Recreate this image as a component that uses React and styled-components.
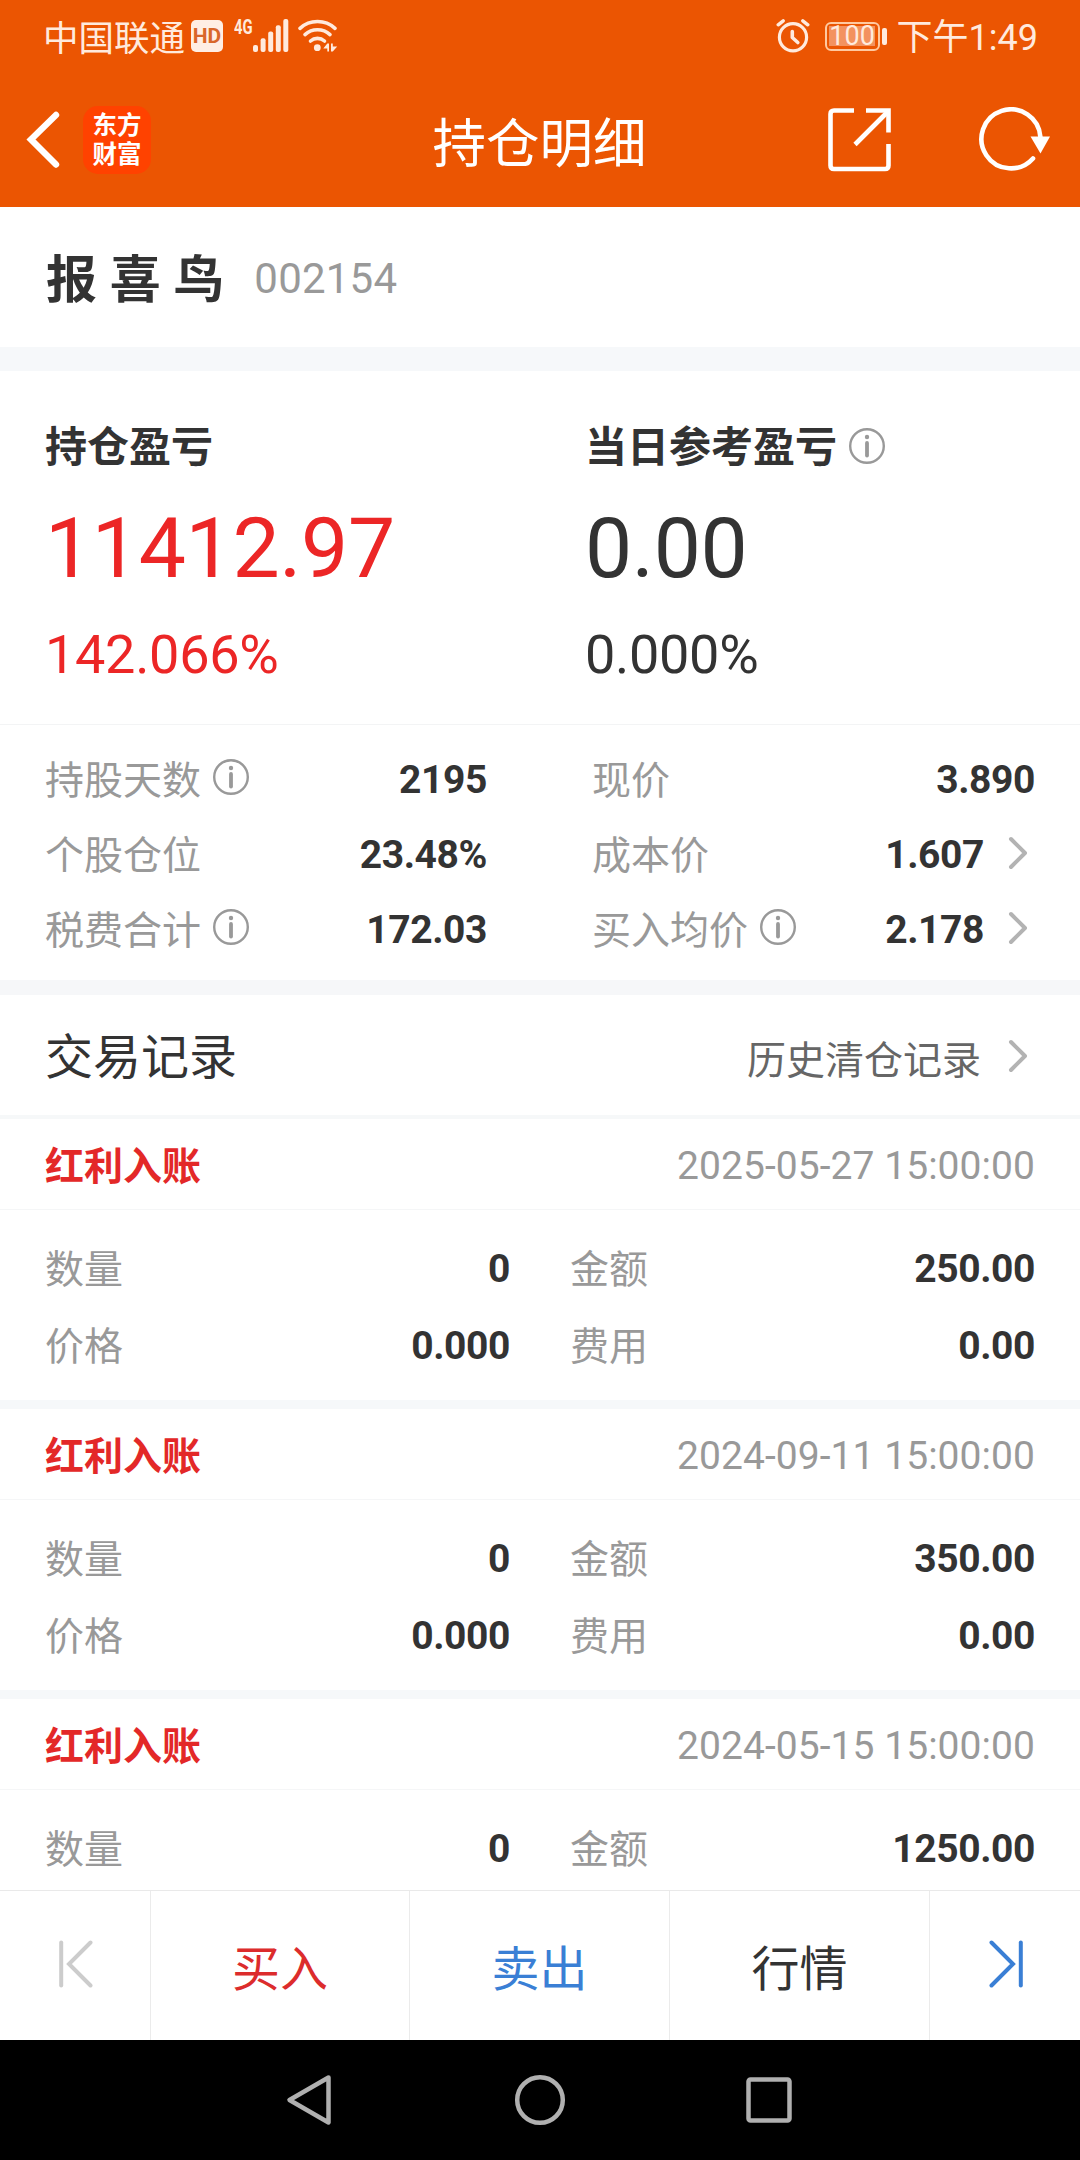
import React from 'react'
import styled, { createGlobalStyle } from 'styled-components'

const details = {
    left: [
        { label: '持股天数', value: '2195', info: true },
        { label: '个股仓位', value: '23.48%' },
        { label: '税费合计', value: '172.03', info: true },
    ],
    right: [
        { label: '现价', value: '3.890' },
        { label: '成本价', value: '1.607', link: true },
        { label: '买入均价', value: '2.178', info: true, link: true },
    ],
}

const records = [
    {
        type: '红利入账',
        time: '2025-05-27 15:00:00',
        cells: [['数量', '0'], ['金额', '250.00'], ['价格', '0.000'], ['费用', '0.00']],
    },
    {
        type: '红利入账',
        time: '2024-09-11 15:00:00',
        cells: [['数量', '0'], ['金额', '350.00'], ['价格', '0.000'], ['费用', '0.00']],
    },
    {
        type: '红利入账',
        time: '2024-05-15 15:00:00',
        cells: [['数量', '0'], ['金额', '1250.00']],
    },
]

//icons...
const InfoIcon = () => (
    <InfoSvg viewBox='0 0 36 36' width='36' height='36'>
        <circle cx='18' cy='18' r='16.8' fill='none' stroke='#999' strokeWidth='2.4' />
        <circle cx='18' cy='9' r='2.2' fill='#999' />
        <path d='M18 15v12.5' stroke='#999' strokeWidth='3.8' strokeLinecap='round' />
    </InfoSvg>
)

const Chevron = () => (
    <ChevronSvg viewBox='0 0 20 34' width='20' height='34'>
        <path d='M3 3l14 14L3 31' fill='none' stroke='#b3b3b3' strokeWidth='4' strokeLinecap='round' strokeLinejoin='round' />
    </ChevronSvg>
)

const SignalIcon = () => (
    <svg viewBox='0 0 36 34' width='36' height='34' fill='#ffeadd'>
        <rect x='0' y='26' width='5' height='7' rx='2' />
        <rect x='7.6' y='19.3' width='5' height='13.7' rx='2' />
        <rect x='15.2' y='12.6' width='5' height='20.4' rx='2' />
        <rect x='22.8' y='6.3' width='5' height='26.7' rx='2' />
        <rect x='30.3' y='0' width='5' height='33' rx='2' />
    </svg>
)

const WifiIcon = () => (
    <svg viewBox='0 0 40 34' width='40' height='34'>
        <g fill='none' stroke='#ffeadd' strokeWidth='3.6' strokeLinecap='round'>
            <path d='M2 9.3a26 26 0 0 1 35 0' />
            <path d='M7 15.6a18.5 18.5 0 0 1 25 0' />
            <path d='M12.5 22a10.8 10.8 0 0 1 14 0' />
        </g>
        <circle cx='19.3' cy='28.7' r='3.4' fill='#ffeadd' />
        <path d='M25.3 29.5L29.300 24.500H31V32.500H29.300V29.500ZM33 24.500H34.800V27.500H39.200L34.800 32.500H33Z' fill='#ffeadd' />
    </svg>
)

const AlarmIcon = () => (
    <svg viewBox='0 0 34 34' width='34' height='34' fill='none' stroke='#ffeadd' strokeLinecap='round'>
        <circle cx='17' cy='18.2' r='13.6' strokeWidth='3.2' />
        <path d='M16.3 12.5V18.5l5.5 5' strokeWidth='3.6' strokeLinejoin='round' />
        <path d='M2.2 5.8l5-4M31.8 5.8l-5-4' strokeWidth='3.4' />
    </svg>
)

const BackIcon = () => (
    <svg viewBox='0 0 36 60' width='36' height='60'>
        <path d='M32 5L7 29.500L32 54.500' fill='none' stroke='#fff' strokeWidth='6.4' strokeLinecap='round' />
    </svg>
)

const ShareIcon = () => (
    <svg viewBox='0 0 64 64' width='64' height='64' fill='none' stroke='#fff' strokeWidth='4.6'>
        <path d='M26 2.5H6Q2.5 2.5 2.5 6V57.5Q2.5 61 6 61H57Q60.5 61 60.5 57.5V36' />
        <path d='M38 2.5H60.5V24.5' />
        <path d='M27 36.5L60 3.5' />
    </svg>
)

const RefreshIcon = () => (
    <svg viewBox='0 0 72 66' width='72' height='66'>
        <path d='M54 51.5A29.5 29.5 0 1 1 61.4 30' fill='none' stroke='#fff' strokeWidth='4.6' strokeLinecap='round' />
        <path d='M51.5 29.5H71L61.5 46.5Z' fill='#fff' />
    </svg>
)

const StepIcon = ({ color, flip }) => (
    <StepSvg viewBox='0 0 34 48' width='34' height='48' $flip={flip} stroke={color}>
        <path d='M2.2 2.5V45.5' />
        <path d='M31.5 2.5L10 24L31.5 45.5' />
    </StepSvg>
)

const Detail = ({ item }) => (
    <DetailRow>
        <Label>{item.label}</Label>
        {item.info && <InfoIcon />}
        <Value>{item.value}</Value>
        {item.link && <Chevron />}
    </DetailRow>
)

const Record = ({ record }) => (
    <RecordStyled>
        <RecordHead>
            <RecordType>{record.type}</RecordType>
            <RecordTime>{record.time}</RecordTime>
        </RecordHead>
        <RecordBody>
            {record.cells.map(([label, value]) => (
                <RecordCell key={label}>
                    <Label>{label}</Label>
                    <Value>{value}</Value>
                </RecordCell>
            ))}
        </RecordBody>
    </RecordStyled>
)

const App = () => {
    return (
        <Screen>
            <GlobalStyle />
            <Header>
                <StatusBar>
                    <Carrier>中国联通</Carrier>
                    <HdBadge>HD</HdBadge>
                    <Network>4G</Network>
                    <SignalIcon />
                    <WifiCont><WifiIcon /></WifiCont>
                    <StatusRight>
                        <AlarmIcon />
                        <Battery><span>100</span></Battery>
                        <BatteryTip />
                        <Clock>下午1:49</Clock>
                    </StatusRight>
                </StatusBar>
                <NavBar>
                    <NavSide>
                        <BackIcon />
                        <Logo>
                            <span>东方</span>
                            <span>财富</span>
                        </Logo>
                    </NavSide>
                    <Title>持仓明细</Title>
                    <NavSide $end>
                        <ShareIcon />
                        <RefreshIcon />
                    </NavSide>
                </NavBar>
            </Header>

            <StockName>
                <h1>报 喜 鸟</h1>
                <span>002154</span>
            </StockName>

            <Summary>
                <SummaryCol $color='#ec2626'>
                    <h3>持仓盈亏</h3>
                    <Amount>11412.97</Amount>
                    <Percent>142.066%</Percent>
                </SummaryCol>
                <SummaryCol $color='#333'>
                    <h3>当日参考盈亏<InfoIcon /></h3>
                    <Amount>0.00</Amount>
                    <Percent>0.000%</Percent>
                </SummaryCol>
            </Summary>

            <Details>
                <div>{details.left.map((item) => <Detail key={item.label} item={item} />)}</div>
                <div>{details.right.map((item) => <Detail key={item.label} item={item} />)}</div>
            </Details>

            <SectionHead>
                <h2>交易记录</h2>
                <HistoryLink>历史清仓记录</HistoryLink>
                <Chevron />
            </SectionHead>

            <RecordList>
                {records.map((record) => <Record key={record.time} record={record} />)}
            </RecordList>

            <ActionBar>
                <Action><StepIcon color='#ccc' /></Action>
                <Action $color='#dc2c2c'>买入</Action>
                <Action $color='#3a7fd5'>卖出</Action>
                <Action $color='#333'>行情</Action>
                <Action><StepIcon color='#3a7fd5' flip /></Action>
            </ActionBar>

            <SystemNav>
                <svg viewBox='0 0 52 52' width='52' height='52'>
                    <path d='M43.5 3.5L4.5 26L43.5 48.5Z' />
                </svg>
                <svg viewBox='0 0 52 52' width='52' height='52'>
                    <circle cx='26' cy='26' r='22.8' />
                </svg>
                <svg viewBox='0 0 52 52' width='52' height='52'>
                    <rect x='5.5' y='5.5' width='41' height='41' rx='2' />
                </svg>
            </SystemNav>
        </Screen>
    )
}

const GlobalStyle = createGlobalStyle`
*{
    box-sizing: border-box;
}
body{
    margin: 0;
    background: #fff;
    font-family: Roboto, 'Noto Sans CJK SC', sans-serif;
}
h1, h2, h3{
    margin: 0;
}
svg{
    display: block;
    flex: none;
}
`
const Screen = styled.div`
width: 1080px;
height: 2160px;
display: flex;
flex-direction: column;
overflow: hidden;
background: #fff;
color: #333;
`
const Header = styled.header`
height: 207px;
flex: none;
background: #eb5502;
color: #fff;
`
const StatusBar = styled.div`
height: 72px;
padding: 0 42px 0 43px;
display: flex;
align-items: center;
color: #ffeadd;
`
const Carrier = styled.span`
font-size: 35.5px;
line-height: 42px;
padding-top: 5px;
`
const HdBadge = styled.span`
width: 32px;
height: 32px;
margin-left: 6px;
border-radius: 5px;
background: #ffeee4;
color: #d9662a;
font-size: 21px;
font-weight: 700;
line-height: 33px;
text-align: center;
`
const Network = styled.span`
margin: 0 0 19px 11px;
width: 19px;
font-size: 20px;
font-weight: 700;
line-height: 20px;
white-space: nowrap;
transform: scaleX(.74);
transform-origin: left;
`
const WifiCont = styled.div`
margin-left: 9px;
`
const StatusRight = styled.div`
margin-left: auto;
display: flex;
align-items: center;
`
const Battery = styled.div`
width: 55px;
height: 29px;
margin-left: 15px;
padding: 2.5px;
border: 2px solid #ffc9a0;
border-radius: 6px;
span{
    display: block;
    height: 20px;
    background: #f3925f;
    font-size: 27px;
    line-height: 21px;
    text-align: center;
}
`
const BatteryTip = styled.div`
width: 5px;
height: 17px;
margin-left: 2px;
border-radius: 2px;
background: #ffeadd;
`
const Clock = styled.span`
margin-left: 10px;
padding-top: 3px;
font-size: 36px;
line-height: 42px;
`
const NavBar = styled.nav`
height: 135px;
padding: 0 29px 0 24px;
display: grid;
grid-template-columns: 1fr auto 1fr;
align-items: center;
`
const NavSide = styled.div`
display: flex;
align-items: center;
gap: ${(p) => p.$end ? '87px' : '23px'};
justify-content: ${(p) => p.$end ? 'flex-end' : 'flex-start'};
`
const Logo = styled.div`
width: 68px;
height: 68px;
border-radius: 15px;
background: #ff4200;
display: flex;
flex-direction: column;
align-items: center;
justify-content: center;
span{
    font-size: 24.5px;
    font-weight: 700;
    line-height: 29px;
}
`
const Title = styled.div`
font-size: 53.5px;
line-height: 64px;
padding: 10px 0 0 4px;
`
const StockName = styled.section`
height: 140px;
flex: none;
padding: 6px 45px 0 46px;
display: flex;
align-items: center;
h1{
    padding-top: 2px;
    font-size: 51px;
    line-height: 60px;
}
span{
    margin-left: 30px;
    padding-bottom: 2px;
    font-size: 42px;
    line-height: 50px;
    letter-spacing: .2px;
    color: #999;
}
`
const Summary = styled.section`
height: 378px;
flex: none;
padding: 51px 45px 0;
border-top: 24px solid #f6f8fa;
border-bottom: 1px solid #f3f4f5;
display: grid;
grid-template-columns: 540px 1fr;
`
const SummaryCol = styled.div`
color: ${(p) => p.$color};
h3{
    display: flex;
    align-items: center;
    font-size: 42px;
    line-height: 52px;
    color: #333;
}
`
const Amount = styled.div`
margin-top: 26px;
font-size: 84px;
line-height: 98px;
letter-spacing: -.35px;
`
const Percent = styled.div`
margin-top: 25px;
font-size: 54px;
line-height: 64px;
letter-spacing: -.3px;
`
const InfoSvg = styled.svg`
margin: 0 0 5px 12px;
`
const ChevronSvg = styled.svg`
margin: 0 7px 4px 24px;
`
const Details = styled.section`
height: 255px;
flex: none;
padding: 17px 45px 0;
display: grid;
grid-template-columns: 442px 443px;
justify-content: space-between;
`
const DetailRow = styled.div`
height: 75px;
display: flex;
align-items: center;
font-size: 39px;
line-height: 46px;
`
const Label = styled.span`
padding-top: 2px;
color: #999;
`
const Value = styled.span`
margin-left: auto;
font-weight: 700;
letter-spacing: -.4px;
`
const SectionHead = styled.section`
height: 139px;
flex: none;
padding: 6px 45px 0;
border-top: 15px solid #f6f7f9;
border-bottom: 4px solid #f6f8f9;
display: flex;
align-items: center;
h2{
    font-size: 48px;
    font-weight: 400;
    line-height: 56px;
}
`
const HistoryLink = styled.span`
margin-left: auto;
padding: 6px 3px 0 0;
font-size: 39px;
line-height: 46px;
color: #666;
`
const RecordList = styled.section`
flex: 1;
min-height: 0;
overflow: hidden;
`
const RecordStyled = styled.article`
height: 290px;
border-bottom: 9px solid #f6f8fa;
`
const RecordHead = styled.div`
height: 91px;
padding: 4px 45px 0;
border-bottom: 1px solid #f5f6f7;
display: flex;
align-items: center;
justify-content: space-between;
font-size: 39px;
line-height: 46px;
`
const RecordType = styled.span`
padding-top: 2px;
color: #e32828;
font-weight: 700;
`
const RecordTime = styled.span`
letter-spacing: .05px;
color: #999;
`
const RecordBody = styled.div`
padding: 20px 45px 0;
display: grid;
grid-template-columns: 1fr 1fr;
column-gap: 60px;
`
const RecordCell = styled.div`
height: 77px;
display: flex;
align-items: center;
font-size: 39px;
line-height: 46px;
`
const ActionBar = styled.footer`
height: 150px;
flex: none;
border-top: 1px solid #e9e9e9;
display: grid;
grid-template-columns: 151px 259px 260px 260px 150px;
`
const Action = styled.div`
display: flex;
align-items: center;
justify-content: center;
padding-top: 9px;
font-size: 48px;
line-height: 56px;
color: ${(p) => p.$color};
&:not(:last-child){
    border-right: 1px solid #ebebeb;
}
`
const StepSvg = styled.svg`
margin: 0 0 13px 1px;
fill: none;
stroke-width: 4;
stroke-linecap: round;
transform: ${(p) => p.$flip ? 'scaleX(-1)' : 'none'};
`
const SystemNav = styled.div`
height: 120px;
flex: none;
background: #000;
display: flex;
align-items: center;
justify-content: center;
gap: 177px;
svg{
    fill: none;
    stroke: #b0b0b0;
    stroke-width: 4.5;
    stroke-linejoin: round;
}
`

export default App
